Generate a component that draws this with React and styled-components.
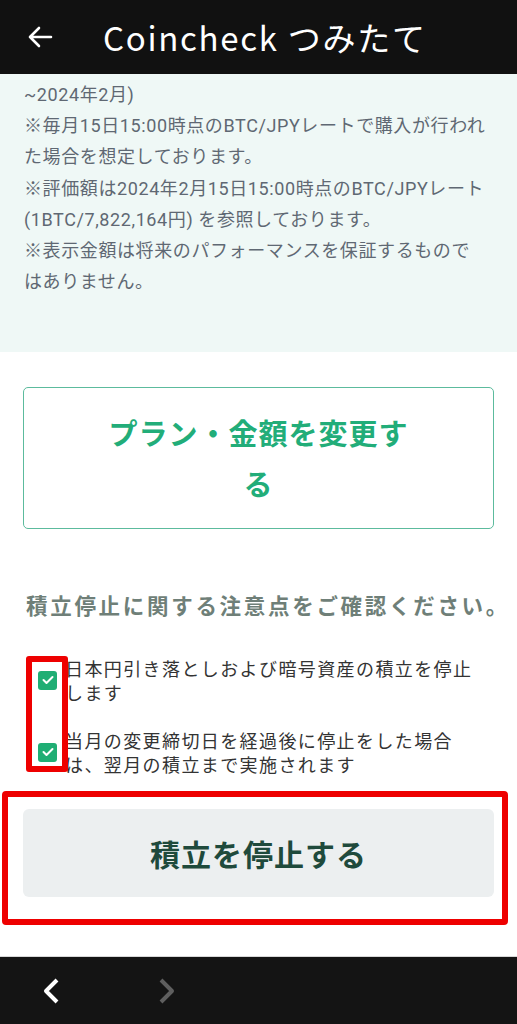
import styled, { createGlobalStyle } from 'styled-components';

const GlobalStyle = createGlobalStyle`
    body {
        margin: 0;
        background: #fff;
        font-family: 'Noto Sans CJK JP', 'Noto Sans', sans-serif;
    }
`;

const notes = [
    '~2024年2月)',
    '※毎月15日15:00時点のBTC/JPYレートで購入が行われ',
    'た場合を想定しております。',
    '※評価額は2024年2月15日15:00時点のBTC/JPYレート',
    '(1BTC/7,822,164円) を参照しております。',
    '※表示金額は将来のパフォーマンスを保証するもので',
    'はありません。',
];

const checks = [
    ['日本円引き落としおよび暗号資産の積立を停止', 'します'],
    ['当月の変更締切日を経過後に停止をした場合', 'は、翌月の積立まで実施されます'],
];

const App = () => {
    return (
        <Page>
            <GlobalStyle />
            <Header>
                <svg width="26" height="22" viewBox="0 0 26 22">
                    <path d="M24 11H3M12 2L3 11l9 9" fill="none" stroke="#fff" strokeWidth="2.6" strokeLinecap="round" strokeLinejoin="round" />
                </svg>
                <Title>Coincheck つみたて</Title>
            </Header>

            <InfoPanel>
                {notes.map((line, i) => (
                    <NoteLine key={i}>{line}</NoteLine>
                ))}
            </InfoPanel>

            <Body>
                <OutlineButton>
                    <OutlineLabel>プラン・金額を変更する</OutlineLabel>
                </OutlineButton>

                <Heading>積立停止に関する注意点をご確認ください。</Heading>

                <CheckList>
                    {checks.map((lines, i) => (
                        <CheckItem key={i}>
                            <CheckBox>
                                <svg width="12" height="10" viewBox="0 0 12 10">
                                    <path d="M1.5 5l3 3 6-6" fill="none" stroke="#fff" strokeWidth="2" strokeLinecap="round" strokeLinejoin="round" />
                                </svg>
                            </CheckBox>
                            <CheckText>
                                {lines[0]}
                                <br />
                                {lines[1]}
                            </CheckText>
                        </CheckItem>
                    ))}
                    <MarkSmall />
                </CheckList>

                <StopWrap>
                    <StopButton>積立を停止する</StopButton>
                    <MarkLarge />
                </StopWrap>
            </Body>

            <BottomNav>
                <svg width="20" height="28" viewBox="0 0 20 28">
                    <path d="M16 3L5 14l11 11" fill="none" stroke="#fff" strokeWidth="4" strokeLinejoin="round" />
                </svg>
                <svg width="20" height="28" viewBox="0 0 20 28">
                    <path d="M4 3l11 11L4 25" fill="none" stroke="#5f5f5f" strokeWidth="4" strokeLinejoin="round" />
                </svg>
            </BottomNav>
        </Page>
    );
};

export default App;

const Page = styled.div`
    width: 517px;
    height: 1024px;
    display: flex;
    flex-direction: column;
    overflow: hidden;
`;

const Header = styled.div`
    height: 74px;
    flex-shrink: 0;
    background: #111;
    display: flex;
    align-items: center;
    padding: 0 0 0 27px;
    gap: 50px;
`;

const Title = styled.span`
    color: #fff;
    font-size: 33px;
    font-weight: 400;
    letter-spacing: 1.7px;
`;

const InfoPanel = styled.div`
    background: #eff8f6;
    padding: 5px 24px 55px;
    display: flex;
    flex-direction: column;
`;

const NoteLine = styled.div`
    color: #5f6873;
    font-family: Roboto, 'Noto Sans CJK JP', sans-serif;
    font-size: 18px;
    line-height: 31.2px;
    letter-spacing: 0.6px;
    white-space: nowrap;
`;

const Body = styled.div`
    flex: 1;
    display: flex;
    flex-direction: column;
    padding: 35px 23px 0;
`;

const OutlineButton = styled.div`
    height: 142px;
    box-sizing: border-box;
    border: 1.5px solid #5cbb9d;
    border-radius: 5px;
    display: flex;
    align-items: center;
    justify-content: center;
`;

const OutlineLabel = styled.div`
    width: 310px;
    text-align: center;
    color: #22ad79;
    font-size: 29px;
    font-weight: 700;
    line-height: 51px;
    letter-spacing: 1px;
`;

const Heading = styled.div`
    margin-top: 61px;
    color: #6f7f78;
    font-size: 21.5px;
    font-weight: 700;
    line-height: 30px;
    letter-spacing: 2.7px;
    padding-left: 3px;
    white-space: nowrap;
`;

const CheckList = styled.div`
    position: relative;
    margin-top: 36px;
    padding-left: 15px;
    display: flex;
    flex-direction: column;
    gap: 24px;
`;

const CheckItem = styled.div`
    display: flex;
    align-items: center;
    gap: 8px;
`;

const CheckBox = styled.div`
    width: 19px;
    height: 19px;
    flex-shrink: 0;
    border-radius: 3px;
    background: #1fae74;
    display: flex;
    align-items: center;
    justify-content: center;
`;

const CheckText = styled.div`
    color: #333;
    font-size: 18px;
    line-height: 24px;
    letter-spacing: 1.4px;
    white-space: nowrap;
`;

const MarkSmall = styled.div`
    position: absolute;
    left: 3px;
    top: 0;
    width: 42px;
    height: 116px;
    box-sizing: border-box;
    border: 6px solid #ee0000;
    border-radius: 3px;
`;

const StopWrap = styled.div`
    position: relative;
    margin-top: 33px;
`;

const StopButton = styled.div`
    height: 88px;
    border-radius: 6px;
    background: #eceff0;
    display: flex;
    align-items: center;
    justify-content: center;
    color: #1f4a3c;
    font-size: 30px;
    font-weight: 700;
    letter-spacing: 1px;
`;

const MarkLarge = styled.div`
    position: absolute;
    left: -21px;
    top: -18px;
    right: -14px;
    bottom: -28px;
    border: 6px solid #ee0000;
    border-radius: 4px;
`;

const BottomNav = styled.div`
    height: 67px;
    flex-shrink: 0;
    background: #141414;
    border-top: 1px solid #d8d8d8;
    display: flex;
    align-items: center;
    padding-left: 41px;
    gap: 96px;
`;
